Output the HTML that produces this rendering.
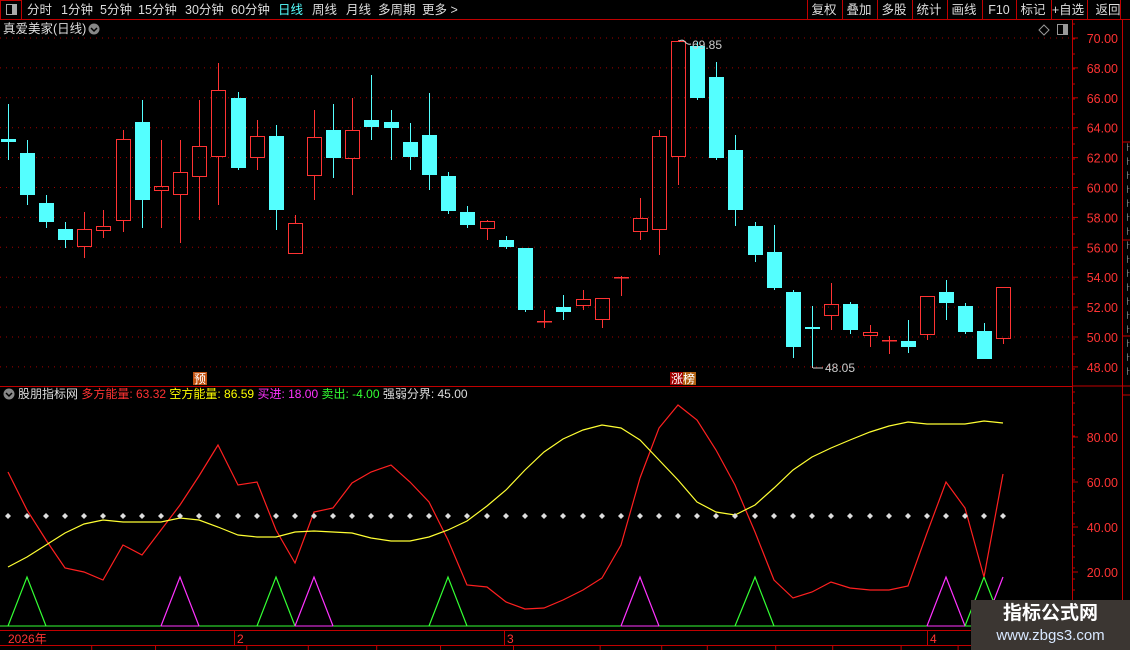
<!DOCTYPE html>
<html><head><meta charset="utf-8">
<style>
body{margin:0;background:#000;width:1130px;height:650px;overflow:hidden;font-family:"Liberation Sans","Noto Sans CJK SC",sans-serif;}
svg{position:absolute;left:0;top:0}
.wm{position:absolute;left:971px;top:600px;width:159px;height:50px;background:#3b3632;text-align:center}
.wm .a{color:#fff;font-weight:bold;font-size:19px;line-height:26px;margin-top:1px}
.wm .b{color:#d8e8ff;font-size:15px;line-height:18px}
</style></head><body>
<svg id="s" width="1130" height="650" xmlns="http://www.w3.org/2000/svg" font-family="Liberation Sans, Noto Sans CJK SC, sans-serif"></svg>
<div class="wm"><div class="a">指标公式网</div><div class="b">www.zbgs3.com</div></div>
<script>
var s=document.getElementById('s'),h='';
function R(x,y,w,hh,f,st){h+='<rect x="'+x+'" y="'+y+'" width="'+w+'" height="'+hh+'" fill="'+(f||'none')+'"'+(st?' stroke="'+st+'"':'')+'/>';}
function L(x1,y1,x2,y2,c,d){h+='<line x1="'+x1+'" y1="'+y1+'" x2="'+x2+'" y2="'+y2+'" stroke="'+c+'"'+(d?' stroke-dasharray="'+d+'"':'')+'/>';}
function T(x,y,t,c,sz,a){h+='<text x="'+x+'" y="'+y+'" fill="'+c+'" font-size="'+(sz||12)+'"'+(a?' text-anchor="'+a+'"':'')+'>'+t+'</text>';}
L(0,19.5,1130,19.5,'#c00000');
R(0.5,0.5,21,19,null,'#c00000');R(6.5,4.5,10,10,null,'#aaa');R(12,5,4,9,'#aaa');
var tb=[['分时',27],['1分钟',61],['5分钟',100],['15分钟',138],['30分钟',185],['60分钟',231],['日线',278],['周线',312],['月线',346],['多周期',378],['更多 &gt;',422]];
tb.forEach(function(b){T(b[1],14,b[0],b[0]=='日线'?'#5ff':'#ddd',12.5);});
var bt=[['复权',807],['叠加',842],['多股',877],['统计',912],['画线',947],['F10',982],['标记',1016],['+自选',1051],['返回',1087]];
bt.forEach(function(b,i){L(b[1]+0.5,0,b[1]+0.5,19,'#c00000');T(b[1]+(i==8?21:17),14,b[0],'#ddd',12.5,'middle');});
L(1120.5,0,1120.5,19,'#c00000');
T(3,33,'真爱美家(日线)','#ddd',12.5);h+='<circle cx="94" cy="29" r="5.5" fill="#888"/><path d="M91 28l3 3 3-3" stroke="#000" fill="none" stroke-width="1.5"/>';
h+='<path d="M1044 25l5 5-5 5-5-5z" stroke="#999" fill="none"/>';R(1057.5,24.5,10,10,null,'#999');R(1063,25,4,9,'#999');
L(1072.5,20,1072.5,630,'#c00000');L(1122.5,20,1122.5,650,'#c00000');
L(1072,386,1130,386,'#c00000');
for(var p=48;p<=70;p+=2){var y=38+(70-p)*14.95;L(0,y,1072,y,'#a00000','1 5');L(1072,y,1078,y,'#c00000');T(1118,y+5,p.toFixed(2),'#ff3333',12.5,'end');}
for(var y=24;y<380;y+=15)L(1072,y,1075,y,'#c00000');
L(1122,142,1130,142,'#c00000');L(1122,240,1130,240,'#c00000');L(1122,336,1130,336,'#c00000');
for(var y=150;y<380;y+=14)T(1124,y,'ㅏ','#999',8);
var c=[[8,'c',139,142,104,160],[27,'c',153,195,140,205],[46,'c',203,222,195,228],[65,'c',229,240,222,248],[84,'r',229,247,212,258],[103,'r',226,231,210,238],[123,'r',139,221,130,232],[142,'c',122,200,100,228],[161,'r',186,191,140,228],[180,'r',172,195,140,243],[199,'r',146,177,100,220],[218,'r',90,157,63,205],[238,'c',98,168,92,170],[257,'r',136,158,120,170],[276,'c',136,210,125,230],[295,'r',223,254,215,254],[314,'r',137,176,110,200],[333,'c',130,158,104,178],[352,'r',130,159,98,195],[371,'c',120,127,75,140],[391,'c',122,128,110,160],[410,'c',142,157,123,170],[429,'c',135,175,93,190],[448,'c',176,211,172,214],[467,'c',212,225,206,228],[487,'r',221,229,220,240],[506,'c',240,247,236,249],[525,'c',248,310,248,312],[544,'r',321,322,310,328],[563,'c',307,312,295,320],[583,'r',299,306,290,310],[602,'r',298,320,298,328],[621,'r',277,278,276,296],[640,'r',218,232,198,240],[659,'r',136,230,130,255],[678,'r',41,157,40,185],[697,'c',46,98,42,100],[716,'c',77,158,62,160],[735,'c',150,210,135,226],[755,'c',226,255,222,262],[774,'c',252,288,225,290],[793,'c',292,347,290,358],[812,'c',327,329,306,366],[831,'r',304,316,283,330],[850,'c',304,330,302,334],[870,'r',332,336,325,347],[889,'r',340,341,336,354],[908,'c',341,347,320,353],[927,'r',296,335,296,340],[946,'c',292,303,280,320],[965,'c',306,332,303,334],[984,'c',331,359,323,359],[1003,'r',287,339,287,344]];
c.forEach(function(k){var x=k[0];if(k[1]=='c'){L(x+0.5,k[4],x+0.5,k[5],'#5ff');R(x-7,k[2],15,Math.max(2,k[3]-k[2]),'#54ffff');}else{L(x+0.5,k[4],x+0.5,k[2],'#ff3333');L(x+0.5,k[3],x+0.5,k[5],'#ff3333');if(k[3]-k[2]<3)R(x-7,k[2],15,1.5,'#ff3333');else R(x-6.5,k[2]+0.5,14,k[3]-k[2]-1,null,'#ff3333');}});
T(692,49,'69.85','#ccc',12);h+='<path d="M679 41 q4 -2 6 1 q3 3 6 2" stroke="#ccc" fill="none"/>';
L(812.5,366,812.5,368,'#ccc');h+='<path d="M813 368h10" stroke="#ccc"/>';T(825,372,'48.05','#ccc',12);
R(193,372,14,13,'#c05010');T(200,383,'预','#fff',12,'middle');R(670,372,13,13,'#a00000');R(683,372,13,13,'#b06010');T(683,383,'涨榜','#fff',12,'middle');
L(0,386.5,1072,386.5,'#c00000');
h+='<circle cx="9" cy="394" r="5.5" fill="#888"/><path d="M6 393l3 3 3-3" stroke="#000" fill="none" stroke-width="1.5"/>';
h+='<text y="398" font-size="12"><tspan x="18" fill="#ddd">股朋指标网 </tspan><tspan fill="#ff3333">多方能量: 63.32 </tspan><tspan fill="#ffff00">空方能量: 86.59 </tspan><tspan fill="#ff33ff">买进: 18.00 </tspan><tspan fill="#33ff33">卖出: -4.00 </tspan><tspan fill="#ddd">强弱分界: 45.00</tspan></text>';
[[80,437],[60,482],[40,527],[20,572]].forEach(function(a){L(1072,a[1],1078,a[1],'#c00000');T(1118,a[1]+5,a[0].toFixed(2),'#ff3333',12.5,'end');});
for(var y=392;y<630;y+=11)L(1072,y,1075,y,'#c00000');
L(1122,395,1130,395,'#c00000');
var xs=c.map(function(k){return k[0];});
var red=[472,510,540,568,572,580,545,555,530,505,476,445,485,482,530,563,512,508,483,472,465,482,502,540,585,587,602,609,608,600,590,578,545,478,428,405,420,450,485,532,580,598,592,582,588,590,590,586,533,482,508,577,474];
var yel=[567,557,545,533,524,520,522,522,522,518,520,527,535,537,537,532,531,532,533,538,541,541,537,530,521,506,490,470,452,439,430,425,428,440,460,480,502,512,515,505,488,470,457,448,440,432,426,422,424,424,424,421,423];
function PL(a,col){h+='<polyline fill="none" stroke="'+col+'" stroke-width="1.2" points="'+a.map(function(v,i){return xs[i]+','+v;}).join(' ')+'"/>';}
L(0,626,1072,626,'#33ff33');
[[8,'g'],[161,'m'],[257,'g'],[295,'m'],[429,'g'],[621,'m'],[735,'g'],[927,'m'],[965,'g']].forEach(function(t){var i=xs.indexOf(t[0]);var col=t[1]=='g'?'#33ff33':'#ff33ff';h+='<polyline fill="none" stroke="'+col+'" stroke-width="1.2" points="'+xs[i]+',626 '+xs[i+1]+',577 '+xs[i+2]+',626"/>';if(t[1]=='m')L(xs[i],626,xs[i+2],626,'#ff33ff');});
h+='<polyline fill="none" stroke="#ff33ff" stroke-width="1.2" points="984,626 1003,577"/>';
PL(red,'#ff2020');PL(yel,'#ffff33');
xs.forEach(function(x){h+='<path d="M'+x+' 513l3 3-3 3-3-3z" fill="#ddd"/>';});
L(0,630.5,1072,630.5,'#c00000');L(0,645.5,1130,645.5,'#c00000');
T(8,643,'2026年','#ff3333',12);[[237,'2'],[507,'3'],[930,'4']].forEach(function(a){L(a[0]-2.5,631,a[0]-2.5,645,'#c00000');T(a[0],643,a[1],'#ff3333',12);});
[40,68,108,135,165,193,225,263,290,310,340,365,395,420,475,500].forEach(function(x){L(x*2.28+.5,646,x*2.28+.5,650,'#c00000');});
s.innerHTML=h;
</script>
</body></html>
